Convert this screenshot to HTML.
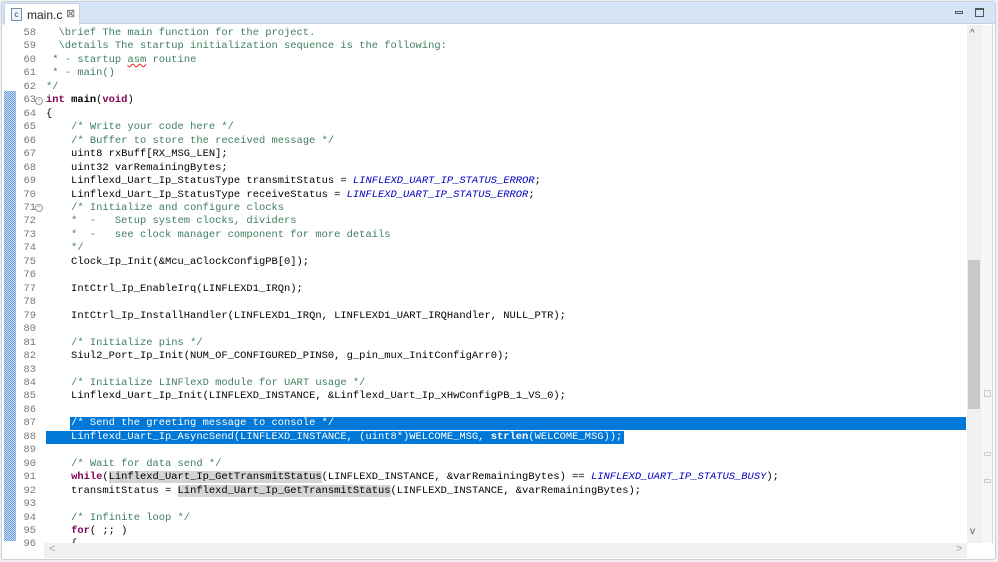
<!DOCTYPE html>
<html><head><meta charset="utf-8"><style>
*{margin:0;padding:0;box-sizing:border-box}
body{width:998px;height:562px;background:#f0f0f0;position:relative;overflow:hidden;font-family:"Liberation Mono",monospace}
#frame{position:absolute;left:1px;top:1px;width:995px;height:559px;border:1px solid #c6d2de;border-radius:3px;background:#fff}
#tabbar{position:absolute;left:0;top:0;width:993px;height:22px;background:#d6e5f5;border-bottom:1px solid #c2d3e6}
#tab{position:absolute;left:2px;top:1px;width:76px;height:22px;background:#fff;border:1px solid #c2d3e6;border-bottom:none;border-radius:3px 3px 0 0;font-family:"Liberation Sans",sans-serif;font-size:12px;color:#222}
#ruler{position:absolute;left:2px;top:89px;width:12px;height:450px;background:repeating-conic-gradient(#6f9fd8 0 25%,#c6dcf4 0 50%) 0 0/2px 2px}
.ln{position:absolute;left:10px;width:24px;text-align:right;color:#787878;font-size:10.45px}
.cd{position:absolute;left:44px;white-space:pre;font-size:10.45px;color:#000}
.c{color:#3f7f5f}.k{color:#7f0055;font-weight:bold}.b{color:#0000c0;font-style:italic}.h{background:#d4d4d4}
.sel{position:absolute;background:#0078d7;height:13px}
</style></head><body>
<div id="frame">
<div id="tabbar"><div id="tab"><span style="position:absolute;left:6px;top:4px;width:11px;height:13px;border:1px solid #7a8ea6;background:#eef3fa;font-size:8px;line-height:11px;text-align:center;color:#345">c</span><span style="position:absolute;left:22px;top:4px">main.c</span><span style="position:absolute;left:61px;top:3px;font-size:11px;color:#666">⊠</span></div>
<div style="position:absolute;left:953px;top:9px;width:8px;height:3px;border:1px solid #555"></div>
<div style="position:absolute;left:973px;top:6px;width:9px;height:9px;border:1px solid #555;border-top-width:2px"></div>
</div>
<div id="ruler"></div>
<div class="sel" style="left:68px;top:415px;width:896px"></div>
<div class="sel" style="left:44px;top:429px;width:578px"></div>
<div style="position:absolute;left:965px;top:23px;width:14px;height:518px;background:#f0f0f0"></div>
<div style="position:absolute;left:966px;top:258px;width:12px;height:149px;background:#c8c8c8"></div>
<div style="position:absolute;left:968px;top:26px;font-size:10px;color:#555;font-family:'Liberation Sans'">^</div>
<div style="position:absolute;left:968px;top:524px;font-size:10px;color:#555;font-family:'Liberation Sans'">v</div>
<div style="position:absolute;left:979px;top:23px;width:12px;height:518px;background:#f6f6f6;border-right:1px solid #ddd"></div>
<div style="position:absolute;left:982px;top:388px;width:7px;height:7px;border:1px solid #ccc"></div>
<div style="position:absolute;left:982px;top:450px;width:7px;height:4px;border:1px solid #ccc"></div>
<div style="position:absolute;left:982px;top:477px;width:7px;height:4px;border:1px solid #ccc"></div>
<div id="code"></div>
<div style="position:absolute;left:42px;top:541px;width:923px;height:15px;background:#f0f0f0"></div>
<div style="position:absolute;left:47px;top:541px;font-size:11px;color:#aaa;font-family:'Liberation Sans'">&lt;</div>
<div style="position:absolute;left:954px;top:541px;font-size:11px;color:#aaa;font-family:'Liberation Sans'">&gt;</div>
</div>
<script>
var L=[
[58,'<span class="c">  \\brief The main function for the project.</span>'],
[59,'<span class="c">  \\details The startup initialization sequence is the following:</span>'],
[60,'<span class="c"> * - startup <u style="text-decoration:underline wavy #e33">asm</u> routine</span>'],
[61,'<span class="c"> * - main()</span>'],
[62,'<span class="c">*/</span>'],
[63,'<span class="k">int</span> <b>main</b>(<span class="k">void</span>)'],
[64,'{'],
[65,'    <span class="c">/* Write your code here */</span>'],
[66,'    <span class="c">/* Buffer to store the received message */</span>'],
[67,'    uint8 rxBuff[RX_MSG_LEN];'],
[68,'    uint32 varRemainingBytes;'],
[69,'    Linflexd_Uart_Ip_StatusType transmitStatus = <span class="b">LINFLEXD_UART_IP_STATUS_ERROR</span>;'],
[70,'    Linflexd_Uart_Ip_StatusType receiveStatus = <span class="b">LINFLEXD_UART_IP_STATUS_ERROR</span>;'],
[71,'    <span class="c">/* Initialize and configure clocks</span>'],
[72,'<span class="c">    *  -   Setup system clocks, dividers</span>'],
[73,'<span class="c">    *  -   see clock manager component for more details</span>'],
[74,'<span class="c">    */</span>'],
[75,'    Clock_Ip_Init(&amp;Mcu_aClockConfigPB[0]);'],
[76,''],
[77,'    IntCtrl_Ip_EnableIrq(LINFLEXD1_IRQn);'],
[78,''],
[79,'    IntCtrl_Ip_InstallHandler(LINFLEXD1_IRQn, LINFLEXD1_UART_IRQHandler, NULL_PTR);'],
[80,''],
[81,'    <span class="c">/* Initialize pins */</span>'],
[82,'    Siul2_Port_Ip_Init(NUM_OF_CONFIGURED_PINS0, g_pin_mux_InitConfigArr0);'],
[83,''],
[84,'    <span class="c">/* Initialize LINFlexD module for UART usage */</span>'],
[85,'    Linflexd_Uart_Ip_Init(LINFLEXD_INSTANCE, &amp;Linflexd_Uart_Ip_xHwConfigPB_1_VS_0);'],
[86,''],
[87,'<span style="color:#fff">    /* Send the greeting message to console */</span>'],
[88,'<span style="color:#fff">    Linflexd_Uart_Ip_AsyncSend(LINFLEXD_INSTANCE, (uint8*)WELCOME_MSG, <b>strlen</b>(WELCOME_MSG));</span>'],
[89,''],
[90,'    <span class="c">/* Wait for data send */</span>'],
[91,'    <span class="k">while</span>(<span class="h">Linflexd_Uart_Ip_GetTransmitStatus</span>(LINFLEXD_INSTANCE, &amp;varRemainingBytes) == <span class="b">LINFLEXD_UART_IP_STATUS_BUSY</span>);'],
[92,'    transmitStatus = <span class="h">Linflexd_Uart_Ip_GetTransmitStatus</span>(LINFLEXD_INSTANCE, &amp;varRemainingBytes);'],
[93,''],
[94,'    <span class="c">/* Infinite loop */</span>'],
[95,'    <span class="k">for</span>( ;; )'],
[96,'    {']];
var h='';L.forEach(function(l,i){var t=25+i*13.46;
h+='<div class="ln" style="top:'+t+'px;height:13px;line-height:13px">'+l[0]+'</div><div class="cd" style="top:'+t+'px;line-height:13px">'+l[1]+'</div>';
if(l[0]==63||l[0]==71)h+='<div style="position:absolute;left:33px;top:'+(t+2.5)+'px;width:8px;height:8px;border:1px solid #999;border-radius:50%;background:#fff;font-size:7px;line-height:6px;text-align:center;color:#666">-</div>';});
document.getElementById('code').innerHTML=h;
</script>
</body></html>
